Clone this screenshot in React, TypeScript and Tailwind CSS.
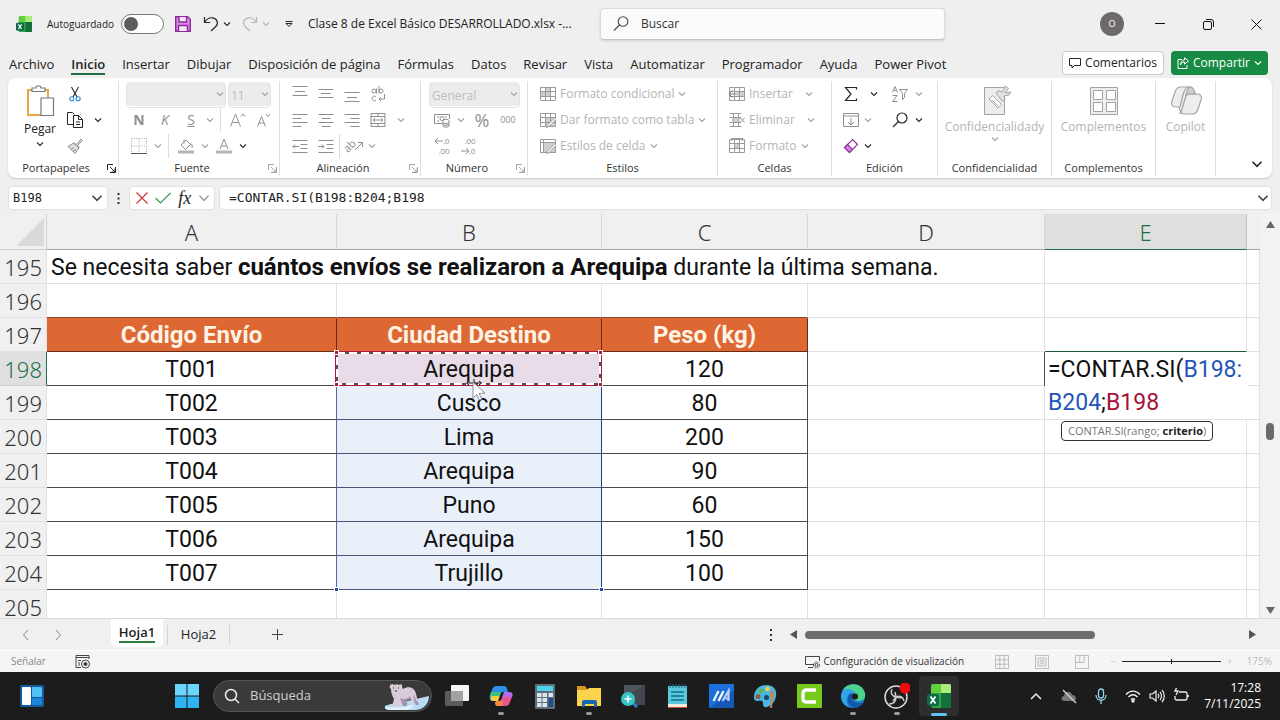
import { ReactNode } from "react";

const GRAY = "#a3a3a3";
const DARK = "#262626";

interface IconProps {
  children: ReactNode;
  size?: string;
  box?: string;
  color?: string;
  width?: number;
}

function Icon({ children, size = "size-4", box = "0 0 16 16", color = GRAY, width = 1 }: IconProps) {
  return (
    <svg
      className={`${size} shrink-0`}
      viewBox={box}
      fill="none"
      stroke={color}
      strokeWidth={width}
      aria-hidden="true"
    >
      {children}
    </svg>
  );
}

function Chevron({ color = GRAY, size = "size-2" }: { color?: string; size?: string }) {
  return (
    <Icon size={size} box="0 0 8 8" color={color} width={1.1}>
      <path d="M1 2.5 4 5.5 7 2.5" />
    </Icon>
  );
}

interface ToolProps {
  label: string;
  children: ReactNode;
  className?: string;
}

function Tool({ label, children, className = "w-[26px]" }: ToolProps) {
  return (
    <button
      type="button"
      aria-label={label}
      className={`flex h-[26px] shrink-0 items-center justify-center ${className}`}
    >
      {children}
    </button>
  );
}

function Drop({ label, color, className = "w-3" }: { label: string; color?: string; className?: string }) {
  return (
    <Tool label={label} className={className}>
      <Chevron color={color} />
    </Tool>
  );
}

interface GroupProps {
  label?: string;
  launcher?: string;
  className: string;
  pad?: string;
  children: ReactNode;
}

function Group({ label, launcher, className, pad = "", children }: GroupProps) {
  return (
    <section
      aria-label={label}
      className={`mb-[2px] mt-[3px] flex shrink-0 flex-col border-r border-[#dedede] ${className}`}
    >
      <div className={`h-[79px] ${pad}`}>{children}</div>
      <div className="flex h-4 items-center text-[11px] leading-4 text-[#333]">
        <span className="flex-1 text-center">{label}</span>
        {launcher && (
          <button type="button" aria-label={`Opciones de ${label}`} className="flex w-[14px] justify-center">
            <Icon size="size-[9px]" box="0 0 9 9" color={launcher}>
              <path d="M8.5 3V8.500H3M.5 6V.5H6M3 3l4.500 4.500M8 4.500V8H4.500" />
            </Icon>
          </button>
        )}
      </div>
    </section>
  );
}

function Row({ children, className = "" }: { children: ReactNode; className?: string }) {
  return <div className={`flex h-[26px] items-center ${className}`}>{children}</div>;
}

function Divider({ className = "" }: { className?: string }) {
  return <span className={`h-6 w-px bg-[#dcdcdc] ${className}`} />;
}

function ExcelLogo({ size }: { size: string }) {
  return (
    <svg className={size} viewBox="0 0 24 24" aria-hidden="true">
      <path d="M4 2a2 2 0 0 1 2-2h16a2 2 0 0 1 2 2v7H4z" fill="#5fd13f" />
      <path d="M14 0h8a2 2 0 0 1 2 2v7H14z" fill="#a9ee7a" />
      <path d="M4 9h20v13a2 2 0 0 1-2 2H6a2 2 0 0 1-2-2z" fill="#2aa84a" />
      <path d="M14 9h10v13a2 2 0 0 1-2 2h-8z" fill="#14713a" />
      <rect y="10" width="12" height="12" rx="2" fill="#0f6b45" />
      <path d="m3.500 12.500 5 7M8.500 12.500l-5 7" stroke="#fff" strokeWidth="1.800" />
    </svg>
  );
}

function TitleBar() {
  return (
    <header className="flex h-12 shrink-0 items-center">
      <div className="flex w-[600px] shrink-0 items-center pl-4">
        <ExcelLogo size="size-4" />
        <label className="ml-[15px] flex items-center gap-1 text-[10px]">
          <span className="w-[70px] whitespace-nowrap">Autoguardado</span>
          <input
            type="checkbox"
            role="switch"
            className="h-5 w-[43px] appearance-none rounded-full border border-[#767676] bg-white p-[2px] before:block before:size-[14px] before:rounded-full before:bg-[#5c5c5c]"
          />
        </label>
        <Tool label="Guardar" className="ml-[6px] w-[26px]">
          <Icon color="#8f2a9e" width={1.4}>
            <path d="M.7.700h12L15.300 3.300v12H.7z" fill="#d58be2" />
            <path d="M4 1v5h7.500V1M3.500 15v-5.500h9V15" fill="#f4e6f7" />
          </Icon>
        </Tool>
        <Tool label="Deshacer" className="ml-[5px] w-5">
          <Icon color={DARK} width={1.2}>
            <path d="M1.500 1v5.500H7M1.800 6.200C4 2.500 7 1.500 9.500 1.800c5 .8 6.500 6 3 9L8 15" />
          </Icon>
        </Tool>
        <Drop label="Lista de deshacer" color={DARK} className="w-3" />
        <Tool label="Rehacer" className="ml-[7px] w-5">
          <Icon color="#b5b5b5" width={1.2}>
            <path d="M14.500 1v5.500H9M14.200 6.200C12 2.500 9 1.500 6.500 1.800c-5 .8-6.500 6-3 9L8 15" />
          </Icon>
        </Tool>
        <Drop label="Lista de rehacer" color="#b5b5b5" />
        <Tool label="Personalizar barra" className="ml-[6px] w-[22px]">
          <Icon size="size-2" box="0 0 8 8" color={DARK}>
            <path d="M.5 1.500h7M1 3.500 4 6.500l3-3z" />
          </Icon>
        </Tool>
        <h1 className="ml-2 whitespace-pre text-[12px]">Clase 8 de Excel Básico DESARROLLADO.xlsx -...</h1>
      </div>
      <div className="flex h-8 w-[345px] items-center rounded border border-[#dcdcdc] border-b-[#c4c4c4] bg-[#fbfbfb] pl-3 shadow-sm">
        <Icon color="#444" width={1.1}>
          <circle cx="10" cy="5.500" r="4.800" />
          <path d="M6.500 9 1 14.500" />
        </Icon>
        <input
          type="search"
          aria-label="Buscar"
          placeholder="Buscar"
          className="ml-3 min-w-0 flex-1 bg-transparent text-[12px] outline-none placeholder:text-[#333]"
        />
      </div>
      <button type="button" className="ml-auto mr-3 size-6 rounded-full bg-[#6e6a69] text-[9px] text-white">
        O
      </button>
      <Tool label="Minimizar" className="w-12">
        <Icon size="size-[10px]" box="0 0 10 10" color="#111">
          <path d="M0 4.500h10" />
        </Icon>
      </Tool>
      <Tool label="Restaurar" className="w-12">
        <Icon size="size-[11px]" box="0 0 11 11" color="#111">
          <rect x=".5" y="2.500" width="8" height="8" rx="1.500" />
          <path d="M3 .5h5a2.500 2.500 0 0 1 2.500 2.500v5" />
        </Icon>
      </Tool>
      <Tool label="Cerrar" className="w-12">
        <Icon size="size-[11px]" box="0 0 11 11" color="#111">
          <path d="m.5.5 10 10M10.500.5l-10 10" />
        </Icon>
      </Tool>
    </header>
  );
}

const menu = [
  "Archivo",
  "Inicio",
  "Insertar",
  "Dibujar",
  "Disposición de página",
  "Fórmulas",
  "Datos",
  "Revisar",
  "Vista",
  "Automatizar",
  "Programador",
  "Ayuda",
  "Power Pivot",
];

function MenuBar() {
  return (
    <div className="flex h-[30px] shrink-0 items-center pl-[9px] pr-3 text-[13px]">
      <nav className="mt-[3px] flex gap-[17px] whitespace-nowrap leading-[18px]">
        {menu.map((name) => (
          <button
            key={name}
            type="button"
            className={
              name === "Inicio"
                ? "border-b-2 border-[#1e7145] font-semibold"
                : "border-b-2 border-transparent"
            }
          >
            {name}
          </button>
        ))}
      </nav>
      <button
        type="button"
        className="ml-auto flex h-6 w-[102px] items-center justify-center gap-1 rounded border border-[#c8c8c8] bg-white text-[12px]"
      >
        <Icon size="size-3" box="0 0 12 12" color={DARK}>
          <path d="M.5 1.500h11v7H5.500L3 11V8.500H.5z" />
        </Icon>
        Comentarios
      </button>
      <button
        type="button"
        className="ml-[7px] flex h-6 w-[97px] items-center justify-center gap-1 rounded bg-[#178a43] text-[12px] text-white"
      >
        <Icon size="size-3" box="0 0 12 12" color="#fff">
          <path d="M5 2.500H1v9h9V8M7.500.800l4 3.200-4 3.200V5C5 5 4 6 3.500 8 3.500 5 5 3 7.500 3z" />
        </Icon>
        Compartir
        <Chevron color="#fff" />
      </button>
    </div>
  );
}

function Lines({ d }: { d: string }) {
  return (
    <Icon color="#8f8f8f">
      <path d={d} />
    </Icon>
  );
}

function GridIcon({ children, fill }: { children?: ReactNode; fill: string }) {
  return (
    <Icon color="#9a9a9a">
      <path d={fill} fill="#cfcfcf" stroke="none" />
      <path d="M.5 1.500h15v13H.5zM.5 5.500h15M.5 10.500h15M5.500 1.500v13M10.500 1.500v13" />
      {children}
    </Icon>
  );
}

function FormatButton({ icon, children, gap = "gap-1" }: { icon: ReactNode; children: ReactNode; gap?: string }) {
  return (
    <button type="button" className={`flex h-[26px] items-center whitespace-nowrap text-[12px] text-[#b4b4b4] ${gap}`}>
      {icon}
      {children}
      <Chevron />
    </button>
  );
}

function ComboBox({ label, value, className }: { label: string; value: string; className: string }) {
  return (
    <div className={`relative h-6 rounded bg-[#ececec] ${className}`}>
      <select
        aria-label={label}
        className="h-6 w-full appearance-none rounded border border-[#e4e4e4] pl-[2px] text-[12px] leading-[22px] text-[#bdbdbd]"
      >
        <option>{value}</option>
      </select>
      <span className="pointer-events-none absolute right-[2px] top-2">
        <Chevron />
      </span>
    </div>
  );
}

function Ribbon() {
  return (
    <div className="mx-2 flex h-[100px] shrink-0 rounded-lg bg-white shadow-[0_1px_2px_rgba(0,0,0,0.15)]">
      <Group label="Portapapeles" launcher={DARK} className="w-[111px]">
        <div className="flex">
          <button type="button" className="ml-[10px] flex w-11 flex-col items-center text-[12px] leading-4">
            <Icon size="mt-1 h-8 w-[30px]" box="0 0 30 32" color="#7a7a7a" width={1.2}>
              <path d="M3 5h20v25H3z" stroke="#e9a548" strokeWidth="2" />
              <path d="M7 6.500V3h4c0-3 5-3 5 0h4v3.500z" fill="#fff" />
              <path d="M16 13h12.500v17.500H16z" fill="#fff" />
            </Icon>
            <span className="mt-1">Pegar</span>
            <span className="mt-[3px]">
              <Chevron color={DARK} />
            </span>
          </button>
          <div>
            <Tool label="Cortar">
              <Icon color={DARK} width={1.1}>
                <path d="M4.500 1l5.500 10M11.500 1 6 11" />
                <circle cx="4.800" cy="12.800" r="2" stroke="#2b88d8" />
                <circle cx="11.200" cy="12.800" r="2" stroke="#2b88d8" />
              </Icon>
            </Tool>
            <Row>
              <Tool label="Copiar">
                <Icon color={DARK}>
                  <path d="M6.500 12.500H.5V.5h5l2 2M6.500 3.500h5l4 4v8h-9zM11.500 3.500v4h4M9 10h4M9 12.500h4" />
                </Icon>
              </Tool>
              <Drop label="Opciones de copiar" color={DARK} className="w-5" />
            </Row>
            <Tool label="Copiar formato">
              <Icon color="#8f8f8f">
                <path d="m10 6 4-5 1.500 1.500L11 7M7 4.500l5.500 5M6.500 5 1 8.500 8 15.500l4-5.500z" fill="#dedede" />
                <path d="m4 11.500 3-2M6 13.500l3-2" />
              </Icon>
            </Tool>
          </div>
        </div>
      </Group>

      <Group label="Fuente" launcher={GRAY} className="w-[161px]" pad="pl-[7px]">
        <Row className="gap-[2px]">
          <ComboBox label="Fuente" value="" className="w-[100px]" />
          <ComboBox label="Tamaño" value="11" className="w-[43px]" />
        </Row>
        <Row className="text-[14px] leading-4 text-[#8f8f8f]">
          <Tool label="Negrita">
            <b>N</b>
          </Tool>
          <Tool label="Cursiva">
            <i>K</i>
          </Tool>
          <Tool label="Subrayado">
            <u>S</u>
          </Tool>
          <Drop label="Tipos de subrayado" />
          <Divider className="mx-1" />
          <Tool label="Aumentar tamaño">
            <Icon color="#8f8f8f">
              <path d="M.5 14.500 5.500 2l5 12.500M2.300 10.500h6.400M11 4.500l2-2.500 2 2.500" />
            </Icon>
          </Tool>
          <Tool label="Disminuir tamaño">
            <Icon color="#8f8f8f">
              <path d="M1.500 14.500 5.500 4.500l4 10M3 11h5M10 2l2 2.500L14 2" />
            </Icon>
          </Tool>
        </Row>
        <Row>
          <Tool label="Bordes">
            <Icon>
              <path d="M.5.5h15v15M.5.5v15M8 .5v15M.5 8h15" strokeDasharray="1 1.500" />
              <path d="M0 15.500h16" stroke="#555" />
            </Icon>
          </Tool>
          <Drop label="Tipos de borde" />
          <Divider className="mx-1" />
          <Tool label="Color de relleno">
            <Icon color="#8f8f8f">
              <path d="m3 7 5-5 4.500 4.500-5 5zM6 1.500v4M12.500 5c1.500 1 2 2.500 1.500 5" />
              <path d="M0 14h16" stroke="#b5b5b5" strokeWidth="3" />
            </Icon>
          </Tool>
          <Drop label="Colores de relleno" />
          <Tool label="Color de fuente">
            <Icon color="#8f8f8f">
              <path d="M4 11 8 1l4 10M5.300 8h5.400" />
              <path d="M0 14h16" stroke="#b5b5b5" strokeWidth="3" />
            </Icon>
          </Tool>
          <Drop label="Colores de fuente" color={DARK} />
        </Row>
      </Group>

      <Group label="Alineación" launcher={GRAY} className="w-[141px]" pad="pl-[7px]">
        <Row>
          <Tool label="Alinear arriba">
            <Lines d="M.5.5h15M3 5.500h10M.5 9.500h15" />
          </Tool>
          <Tool label="Alinear al medio">
            <Lines d="M.5 3.500h15M3 7.500h10M.5 11.500h15" />
          </Tool>
          <Tool label="Alinear abajo">
            <Lines d="M.5 6.500h15M3 11.500h10M.5 15.500h15" />
          </Tool>
          <Tool label="Ajustar texto">
            <Icon color="#8f8f8f">
              <circle cx="4" cy="5" r="2" />
              <path d="M6.500 2.500v5M9 0v7.500M6 10.500c-2-1-4 0-4 2s2 3 4 2M14.500 8v5H9M11 11l-2 2 2 2" />
              <circle cx="11" cy="5" r="2" />
            </Icon>
          </Tool>
        </Row>
        <Row>
          <Tool label="Alinear a la izquierda">
            <Lines d="M.5 2.500h15M.5 6.500h9M.5 10.500h15M.5 14.500h9" />
          </Tool>
          <Tool label="Centrar">
            <Lines d="M.5 2.500h15M3.500 6.500h9M.5 10.500h15M3.500 14.500h9" />
          </Tool>
          <Tool label="Alinear a la derecha">
            <Lines d="M.5 2.500h15M6.500 6.500h9M.5 10.500h15M6.500 14.500h9" />
          </Tool>
          <Tool label="Combinar y centrar">
            <Lines d="M1 1.500h14v13H1zM1 4.500h14M1 11.500h14M8 1.500v3M8 11.500v3M3 8h10M5 6 3 8l2 2M11 6l2 2-2 2" />
          </Tool>
          <Drop label="Opciones de combinar" className="w-5" />
        </Row>
        <Row>
          <Tool label="Disminuir sangría">
            <Lines d="M.5 2.500h15M8.500 6.500h7M8.500 10.500h7M.5 14.500h15M1 8.500h6M3 6.500l-2 2 2 2" />
          </Tool>
          <Tool label="Aumentar sangría">
            <Lines d="M.5 2.500h15M8.500 6.500h7M8.500 10.500h7M.5 14.500h15M0 8.500h6M4 6.500l2 2-2 2" />
          </Tool>
          <Divider />
          <Tool label="Orientación" className="w-[26px] text-[#8f8f8f]">
            <span className="-rotate-45 text-[11px] leading-3">ab</span>
            <Icon size="size-2" box="0 0 8 8" color="#8f8f8f">
              <path d="M0 8 7 1M3 .5h4.500V5" />
            </Icon>
          </Tool>
          <Drop label="Opciones de orientación" />
        </Row>
      </Group>

      <Group label="Número" launcher={GRAY} className="w-[107px]" pad="pl-2">
        <Row>
          <ComboBox label="Formato de número" value="General" className="w-[91px]" />
        </Row>
        <Row className="text-[#8f8f8f]">
          <Tool label="Formato de contabilidad">
            <Icon color="#8f8f8f">
              <path d="M8 11.500H.5v-9h15V7M3 5h2M11 5h2M3 9h2" />
              <circle cx="8" cy="6.500" r="2" />
              <path d="M9 8.500c0-1.500 6-1.500 6 0v5.500c0 1.500-6 1.500-6 0zM9 10.500c0 1.500 6 1.500 6 0M9 12.500c0 1 6 1 6 0" fill="#fff" />
            </Icon>
          </Tool>
          <Drop label="Monedas" />
          <Tool label="Porcentaje" className="ml-[2px] w-[26px] text-[18px]">
            %
          </Tool>
          <Tool label="Estilo millares" className="w-[26px] text-[9px]">
            000
          </Tool>
        </Row>
        <Row className="text-[8px] leading-[10px] text-[#8f8f8f]">
          <Tool label="Aumentar decimales" className="w-[26px] flex-col">
            <span className="flex items-center">
              <Icon size="size-2" box="0 0 8 8" color="#8f8f8f">
                <path d="M0 4h8M3 1 0 4l3 3" />
              </Icon>
              .0
            </span>
            <span className="pl-1">.00</span>
          </Tool>
          <Tool label="Disminuir decimales" className="w-[26px] flex-col">
            <span className="pl-1">.00</span>
            <span className="flex items-center">
              <Icon size="size-2" box="0 0 8 8" color="#8f8f8f">
                <path d="M0 4h8M5 1l3 3-3 3" />
              </Icon>
              .0
            </span>
          </Tool>
        </Row>
      </Group>

      <Group label="Estilos" className="w-[190px]" pad="pl-3">
        <FormatButton icon={<GridIcon fill="M5 1h6v9H5zM1 5h4v5H1z" />}>Formato condicional</FormatButton>
        <FormatButton
          icon={
            <GridIcon fill="M5 5h10v9H5z">
              <path d="m15.500 5-8 8-1 2.500 2.500-1 7-7z" fill="#fff" />
            </GridIcon>
          }
        >
          Dar formato como tabla
        </FormatButton>
        <FormatButton
          icon={
            <Icon color="#9a9a9a">
              <path d="M.5 1.500h15v13H.5z" />
              <path d="M3.500 4.500h12v10h-12z" fill="#cfcfcf" />
              <path d="M.5 4.500h15M3.500 1.500v13" />
              <path d="m15.500 5-8 8-1 2.500 2.500-1 7-7z" fill="#fff" />
            </Icon>
          }
        >
          Estilos de celda
        </FormatButton>
      </Group>

      <Group label="Celdas" className="w-[114px]" pad="pl-[11px]">
        <FormatButton
          gap="gap-1 [&>svg:last-child]:ml-2"
          icon={
            <GridIcon fill="M8 5h7v5H8z">
              <path d="M0 8h8M3.500 4.500 0 8l3.500 3.500" stroke="#777" />
            </GridIcon>
          }
        >
          Insertar
        </FormatButton>
        <FormatButton
          gap="gap-1 [&>svg:last-child]:ml-2"
          icon={
            <Icon color="#9a9a9a">
              <path d="M4 5.500h6v5H4z" fill="#cfcfcf" />
              <path d="M.5 1.500h12M.5 14.500h12M4.500 1.500v4M9.500 1.500v4M4.500 10.500v4M9.500 10.500v4M.5 5.500h12M.5 10.500H12M11.500 6l4 4.500M15.500 6l-4 4.500" />
            </Icon>
          }
        >
          Eliminar
        </FormatButton>
        <FormatButton
          icon={
            <GridIcon fill="M5 5h6v5H5z">
              <path d="M2.500 0v3M13.500 0v3M2.500.500h11" />
            </GridIcon>
          }
        >
          Formato
        </FormatButton>
      </Group>

      <Group label="Edición" className="w-[106px]" pad="pl-[6px]">
        <Row>
          <Tool label="Autosuma">
            <Icon color={DARK} width={1.2}>
              <path d="M13.500 3.500V1.500H2.500L8 8l-5.500 6.500h11v-2" />
            </Icon>
          </Tool>
          <Drop label="Funciones" color={DARK} className="w-5" />
          <Tool label="Ordenar y filtrar" className="ml-px w-[30px]">
            <Icon color="#8f8f8f">
              <path d="M.5 6.500 3 .5l2.500 6M1.500 4.500h3M.5 9.500H5L.5 15.500H5.500M7.500 3.500h8l-3 4v4l-2 2v-6z" />
            </Icon>
          </Tool>
          <Drop label="Opciones de orden" className="w-2" />
        </Row>
        <Row>
          <Tool label="Rellenar">
            <Icon color="#8f8f8f">
              <path d="M.5 1.500h15v13H.5zM.5 4h15M8 6v7M5 10l3 3 3-3" />
            </Icon>
          </Tool>
          <Drop label="Opciones de relleno" className="w-2" />
          <Tool label="Buscar y seleccionar" className="ml-[13px] w-[30px]">
            <Icon color={DARK} width={1.2}>
              <circle cx="10" cy="6" r="5" />
              <path d="M6.500 9.500 1 15" />
            </Icon>
          </Tool>
          <Drop label="Opciones de búsqueda" color={DARK} className="w-2" />
        </Row>
        <Row>
          <Tool label="Borrar">
            <Icon color="#8f2a9e" width={1.1}>
              <path d="M9.500 1.500 14.500 6.500 6.500 14.500 1.500 9.500z" fill="#fff" />
              <path d="m4.500 6.500 5 5-3 3-5-5z" fill="#d58be2" />
            </Icon>
          </Tool>
          <Drop label="Opciones de borrar" color={DARK} className="w-2" />
        </Row>
      </Group>

      <Group label="Confidencialidad" className="w-[114px]">
        <button type="button" className="flex w-full flex-col items-center pt-[3px] text-[12px] leading-4 text-[#b4b4b4]">
          <Icon size="size-8" box="0 0 32 32">
            <path d="M5.500 3.500h20v27h-20z" fill="#ededed" />
            <path d="m10 15 3.500-3.500 9 9L19 24z" fill="#fff" />
            <path d="m12.500 15.500 6.500 6.500" />
            <path d="m17 9 3-2.500 3 2 3.500-6.500 3 2.500L26 9l6-1-2 3-5 1 1 3.500-2.500 2z" fill="#e2e2e2" />
          </Icon>
          <span className="mt-[3px]">Confidencialidady</span>
          <Chevron />
        </button>
      </Group>

      <Group label="Complementos" className="w-[104px]">
        <button type="button" className="flex w-full flex-col items-center pt-[3px] text-[12px] leading-4 text-[#b4b4b4]">
          <Icon size="size-8" box="0 0 32 32">
            <path d="M2.500 3.500h27v27h-27z" fill="#ededed" />
            <path d="M5.500 6.500h9v9h-9zM18.500 6.500h9v9h-9zM5.500 18.500h9v9h-9zM18.500 18.500h9v9h-9z" fill="#fff" />
          </Icon>
          <span className="mt-[3px]">Complementos</span>
        </button>
      </Group>

      <Group className="w-[60px]">
        <button type="button" className="flex w-full flex-col items-center pt-[3px] text-[12px] leading-4 text-[#b4b4b4]">
          <Icon size="size-8" box="0 0 32 32" width={1.2}>
            <path
              d="M11 3h9c4 0 4 4 5 7h3c3 0 4 3 3 6l-3 9c-1 3-2 5-5 5h-9c-4 0-4-4-5-7H5c-3 0-4-3-3-6l3-9c1-3 2-5 6-5z"
              fill="#ededed"
            />
            <path d="M18 3c-3 1-4 4-5 8l-3 12M25 10h-6c-3 0-3 2-4 5l-3 10c-.5 3-1 4-3 5" />
            <path d="M20 3c4 0 4 4 5 7h-6l-3 1c1-4 2-8 4-8z" fill="#cfcfcf" />
          </Icon>
          <span className="mt-[3px]">Copilot</span>
        </button>
      </Group>

      <button type="button" aria-label="Contraer cinta" className="mb-2 ml-auto mr-[9px] self-end">
        <Chevron color={DARK} size="size-3" />
      </button>
    </div>
  );
}

function FormulaBar() {
  return (
    <div className="mt-2 flex h-6 shrink-0 items-center px-2 text-[13px]">
      <div className="flex h-6 w-[100px] items-center rounded border border-[#e2e2e2] bg-white px-1">
        <input
          aria-label="Cuadro de nombres"
          defaultValue="B198"
          className="w-0 flex-1 font-['DejaVu_Sans_Mono',monospace] text-[12px] outline-none"
        />
        <Chevron color="#444" size="size-3" />
      </div>
      <span className="flex w-[21px] justify-center">
        <Icon size="h-[11px] w-[3px]" box="0 0 3 11" color="none">
          <path d="M.5 0h2v2h-2zM.5 4.500h2v2h-2zM.5 9h2v2h-2z" fill="#333" />
        </Icon>
      </span>
      <div className="flex h-6 w-[86px] items-center justify-between rounded border border-[#e2e2e2] bg-white px-1">
        <Tool label="Cancelar" className="w-4">
          <Icon size="size-3" box="0 0 12 12" color="#d13438" width={1.1}>
            <path d="m.5.5 11 11M11.500.5l-11 11" />
          </Icon>
        </Tool>
        <Tool label="Introducir" className="w-4">
          <Icon color="#2e9a54" width={1.1}>
            <path d="m.5 8 5 5 10-10" />
          </Icon>
        </Tool>
        <Tool label="Insertar función" className="w-4 font-['Liberation_Serif',serif] text-[18px] italic">
          fx
        </Tool>
        <Chevron size="size-3" />
      </div>
      <div className="ml-1 flex h-6 flex-1 items-center rounded border border-[#e2e2e2] bg-white pl-[9px] pr-[2px]">
        <input
          aria-label="Barra de fórmulas"
          defaultValue="=CONTAR.SI(B198:B204;B198"
          className="min-w-0 flex-1 font-['DejaVu_Sans_Mono',monospace] outline-none"
        />
        <Chevron color="#444" size="size-3" />
      </div>
    </div>
  );
}

const shipments = [
  { row: 198, code: "T001", city: "Arequipa", weight: 120 },
  { row: 199, code: "T002", city: "Cusco", weight: 80 },
  { row: 200, code: "T003", city: "Lima", weight: 200 },
  { row: 201, code: "T004", city: "Arequipa", weight: 90 },
  { row: 202, code: "T005", city: "Puno", weight: 60 },
  { row: 203, code: "T006", city: "Arequipa", weight: 150 },
  { row: 204, code: "T007", city: "Trujillo", weight: 100 },
];

const cell = "border-b border-r border-[#e1e1e1] p-0";
const data = "border-b border-r border-[#4a4a4a] p-0 pt-[2px]";

function RowHead({ row }: { row: number }) {
  return (
    <th
      scope="row"
      className={
        row === 198
          ? "h-[34px] border-b border-r border-b-[#d0d0d0] border-r-[#1e7145] bg-[#e0e0e0] p-0 pr-1 pt-px text-right font-['Noto_Sans',sans-serif] text-[22px] font-light text-[#1e7145]"
          : "h-[34px] border-b border-r border-[#e1e1e1] bg-[#f0f0f0] p-0 pr-1 pt-px text-right font-['Noto_Sans',sans-serif] text-[22px] font-light text-[#333]"
      }
    >
      {row}
    </th>
  );
}

function Handle({ className }: { className: string }) {
  return <span className={`absolute z-10 size-[5px] border border-white ${className}`} />;
}

function ActiveReference() {
  return (
    <div className="pointer-events-none absolute -inset-px left-[-2px] border-2 border-[#b0183a]">
      <svg className="absolute -inset-px h-[calc(100%+2px)] w-[calc(100%+2px)]" fill="none" strokeWidth="2" aria-hidden="true">
        <rect x="1" y="1" className="h-[calc(100%-2px)] w-[calc(100%-2px)]" stroke="#5d4a4e" />
        <rect x="1" y="1" className="h-[calc(100%-2px)] w-[calc(100%-2px)]" stroke="#fff" strokeDasharray="8 4" />
      </svg>
      <Handle className="-left-[3px] -top-[3px] bg-[#b0183a]" />
      <Handle className="-right-[3px] -top-[3px] bg-[#b0183a]" />
      <Handle className="-bottom-[3px] -left-[3px] bg-[#b0183a]" />
      <Handle className="-bottom-[3px] -right-[3px] bg-[#b0183a]" />
      <svg className="absolute left-[128px] top-[24px] z-20 h-6 w-[22px]" viewBox="0 0 22 24" aria-hidden="true">
        <path d="M2 6h14M4 4 1.500 6 4 8M14 4l2.500 2L14 8M9 2v4" fill="none" stroke="#111" />
        <path d="m8 5 12 11-6 .5 3 5.500-2.500 1.200-2.800-5.700L8 21z" fill="#fff" stroke="#777" strokeWidth=".8" />
      </svg>
    </div>
  );
}

function Sheet() {
  return (
    <div className="mt-1 flex min-h-0 flex-1 overflow-hidden">
      <div className="min-w-0 flex-1 overflow-hidden">
        <table className="w-full table-fixed border-separate border-spacing-0 bg-white font-['Roboto',sans-serif] text-[23px] leading-[31px] text-[#111]">
          <colgroup>
            <col className="w-[47px]" />
            <col className="w-[290px]" />
            <col className="w-[265px]" />
            <col className="w-[206px]" />
            <col className="w-[237px]" />
            <col className="w-[202px]" />
            <col />
          </colgroup>
          <thead>
            <tr className="bg-[#f0f0f0] font-['Noto_Sans',sans-serif] text-[22px]">
              <th aria-label="Seleccionar todo" className="h-9 border-b border-r border-[#d0d0d0] p-0">
                <svg className="ml-4 h-7 w-7" viewBox="0 0 28 28" aria-hidden="true">
                  <path d="M28 0v28H0z" fill="#dadada" />
                </svg>
              </th>
              {["A", "B", "C", "D"].map((name) => (
                <th
                  key={name}
                  scope="col"
                  className="border-b border-r border-b-[#a5a5a5] border-r-[#d8d8d8] p-0 pt-[2px] font-light text-[#333]"
                >
                  {name}
                </th>
              ))}
              <th
                scope="col"
                className="border-b border-r border-b-[#1e7145] border-r-[#c4c4c4] bg-[#dfdfdf] p-0 pt-[2px] font-light text-[#1e7145]"
              >
                E
              </th>
              <th className="border-b border-[#a5a5a5] p-0" />
            </tr>
          </thead>
          <tbody>
            <tr>
              <RowHead row={195} />
              <td colSpan={4} className="whitespace-nowrap border-b border-r border-[#e1e1e1] p-0 pl-1 pt-[2px]">
                Se necesita saber <b className="text-[24px]">cuántos envíos se realizaron a Arequipa</b> durante la última
                semana.
              </td>
              <td className={cell} />
              <td className={cell} />
            </tr>
            <tr>
              <RowHead row={196} />
              <td className={`${cell} border-b-[#8a4a2a]`} />
              <td className={`${cell} border-b-[#8a4a2a]`} />
              <td className={`${cell} border-b-[#8a4a2a]`} />
              <td className={cell} />
              <td className={cell} />
              <td className={cell} />
            </tr>
            <tr>
              <RowHead row={197} />
              {["Código Envío", "Ciudad Destino", "Peso (kg)"].map((name) => (
                <th
                  key={name}
                  scope="col"
                  className="border-b border-r border-[#6b2b12] bg-[#dd6833] p-0 pt-[2px] text-[24px] font-bold text-[#fff3e6]"
                >
                  {name}
                </th>
              ))}
              <td className={cell} />
              <td className={`${cell} border-b-[#1e5a35]`} />
              <td className={cell} />
            </tr>
            {shipments.map(({ row, code, city, weight }) => (
              <tr key={row} className="text-center">
                <RowHead row={row} />
                <td className={`${data} border-r-[#5b6a9c]`}>{code}</td>
                <td
                  className={
                    row === 198
                      ? "relative border-b border-r border-[#1f3f86] bg-[#e8dce8] p-0 pt-[2px]"
                      : "relative border-b border-r border-b-[#4a5478] border-r-[#1f3f86] bg-[#eaf0fa] p-0 pt-[2px]"
                  }
                >
                  {city}
                  {row === 198 && <ActiveReference />}
                  {row === 204 && (
                    <>
                      <Handle className="-bottom-[3px] -left-[3px] bg-[#1f4fa8]" />
                      <Handle className="-bottom-[3px] -right-[3px] bg-[#1f4fa8]" />
                    </>
                  )}
                </td>
                <td className={data}>{weight}</td>
                <td className={cell} />
                {row === 198 && (
                  <td rowSpan={2} className="relative border-b border-[#e1e1e1] p-0 pl-[3px] pt-px text-left align-top leading-[33px]">
                    <span className="absolute left-[-1px] top-0 h-[34px] w-px bg-[#555]" />
                    =CONTAR.SI(<span className="text-[#2456b8]">B198:</span>
                    <br />
                    <span className="text-[#2456b8]">B204</span>;<span className="text-[#a5123a]">B198</span>
                    <div
                      role="tooltip"
                      className="absolute left-4 top-[69px] h-5 whitespace-nowrap rounded border border-[#333] bg-white px-[6px] font-['Open_Sans',sans-serif] text-[11px] leading-[18px] text-[#777]"
                    >
                      CONTAR.SI(rango; <b className="text-[#222]">criterio</b>)
                    </div>
                  </td>
                )}
                {row > 199 && <td className={cell} />}
                <td className={cell} />
              </tr>
            ))}
            <tr>
              <RowHead row={205} />
              <td className={cell} />
              <td className={cell} />
              <td className={cell} />
              <td className={cell} />
              <td className={cell} />
              <td className={cell} />
            </tr>
          </tbody>
        </table>
      </div>
      <div className="flex w-5 shrink-0 flex-col items-center bg-[#f2f2f2] pb-[3px] pt-[6px]">
        <Icon size="size-[9px]" box="0 0 9 9" color="none">
          <path d="M4.500 1 9 8H0z" fill="#666" />
        </Icon>
        <span className="mt-auto h-[17px] w-2 rounded-full bg-[#6a6a6a]" />
        <span className="h-[42%]" />
        <Icon size="size-[9px]" box="0 0 9 9" color="none">
          <path d="M4.500 8 9 1H0z" fill="#666" />
        </Icon>
      </div>
    </div>
  );
}

function SheetTabs() {
  return (
    <div className="flex h-8 shrink-0 items-center border-t border-[#d9d9d9] bg-[#f0f0f0] text-[13px]">
      <Tool label="Hoja anterior" className="ml-[10px] w-8">
        <Icon size="size-[10px]" box="0 0 10 10" color="#888">
          <path d="M7 0 2.500 5 7 10" />
        </Icon>
      </Tool>
      <Tool label="Hoja siguiente" className="w-8">
        <Icon size="size-[10px]" box="0 0 10 10" color="#888">
          <path d="m3 0 4.500 5L3 10" />
        </Icon>
      </Tool>
      <button type="button" className="ml-[37px] h-7 w-[52px] self-start rounded-b-md bg-white font-semibold">
        <span className="border-b-2 border-[#2f7d3a]">Hoja1</span>
      </button>
      <button type="button" className="ml-1 h-5 w-[63px] border-x border-[#d4d4d4]">
        Hoja2
      </button>
      <Tool label="Hoja nueva" className="ml-[34px] w-[26px]">
        <Icon size="size-[11px]" box="0 0 11 11" color="#444">
          <path d="M5.500 0v11M0 5.500h11" />
        </Icon>
      </Tool>
      <div className="ml-auto flex w-[511px] items-center">
        <Icon size="h-3 w-[5px]" box="0 0 5 12" color="none">
          <path d="M1 0h2v2H1zM1 5h2v2H1zM1 10h2v2H1z" fill="#333" />
        </Icon>
        <Tool label="Desplazar a la izquierda" className="ml-2 w-[23px]">
          <Icon size="size-[9px]" box="0 0 9 9" color="none">
            <path d="M1 4.500 8 0v9z" fill="#555" />
          </Icon>
        </Tool>
        <span className="h-2 w-[290px] rounded-full bg-[#6d6d6d]" />
        <Tool label="Desplazar a la derecha" className="ml-auto mr-4 w-6">
          <Icon size="size-[9px]" box="0 0 9 9" color="none">
            <path d="M8 4.500 1 0v9z" fill="#555" />
          </Icon>
        </Tool>
      </div>
    </div>
  );
}

function StatusBar() {
  return (
    <footer className="flex h-[22px] shrink-0 items-center border-t border-white bg-[#f5f5f5] pl-[11px] pr-2 text-[10px]">
      <span className="w-[64px] text-[#888]">Señalar</span>
      <Icon color="#444">
        <path d="M6 13.500H1v-12h13V5M1 3.500h13M3 6.500h3M3 9h2M3 11h2" />
        <circle cx="10.500" cy="10" r="4" />
        <circle cx="10.500" cy="10" r="1.500" fill="#222" />
      </Icon>
      <button type="button" className="ml-auto mr-[18px] flex items-center gap-[2px] whitespace-nowrap text-[#333]">
        <Icon color="#444">
          <path d="M9 10.500H.5v-8h14V7M3 13.500h5" />
          <circle cx="11.500" cy="11" r="3" strokeDasharray="1.500 1" />
          <circle cx="11.500" cy="11" r="1.500" />
        </Icon>
        Configuración de visualización
      </button>
      <div className="flex">
        <Tool label="Normal" className="w-10">
          <Icon size="size-[14px]" color="#b3b3b3">
            <path d="M.5.5h15v15H.5zM.5 5.500h15M.5 10.500h15M5.500.5v15M10.500.5v15" />
          </Icon>
        </Tool>
        <Tool label="Diseño de página" className="w-10">
          <Icon size="size-[14px]" color="#b3b3b3">
            <path d="M.5.5h15v15H.5zM3.500 3.500h9v9h-9zM5.500 6h5M5.500 8h5M5.500 10h5" />
          </Icon>
        </Tool>
        <Tool label="Vista previa de salto de página" className="w-10">
          <Icon size="size-[14px]" color="#b3b3b3">
            <path d="M.5.5h15v15H.5zM5.500.5v8M10.500.5v8M.5 8.500h10" />
          </Icon>
        </Tool>
      </div>
      <span className="ml-2 text-[#ccc]">−</span>
      <input
        type="range"
        aria-label="Zoom"
        defaultValue="50"
        className="mx-[6px] h-px w-[99px] appearance-none bg-[#222] [&::-webkit-slider-thumb]:h-[5px] [&::-webkit-slider-thumb]:w-px [&::-webkit-slider-thumb]:appearance-none [&::-webkit-slider-thumb]:bg-[#222]"
      />
      <span className="text-[#ccc]">+</span>
      <span className="ml-[14px] text-[#bbb]">175%</span>
    </footer>
  );
}

function Art({ children }: { children: ReactNode }) {
  return (
    <svg className="size-[26px]" viewBox="0 0 26 26" aria-hidden="true">
      {children}
    </svg>
  );
}

const apps = [
  {
    name: "Vista de tareas",
    art: (
      <>
        <rect x="1" y="8" width="18" height="15" rx="1" fill="#5b5b5b" />
        <rect x="7" y="2" width="18" height="16" rx="1" fill="#f5f5f5" />
        <path d="M7 8h12v10H7z" fill="#a2a2a2" />
      </>
    ),
  },
  {
    name: "Copilot",
    running: true,
    art: (
      <>
        <path d="M9 3h7c3 0 3 3 4 6h-5c-2 0-3 2-4 6l-1 3H5c-3 0-4-3-3-6l2-5c1-3 2-4 5-4z" fill="#2f8fe8" />
        <path d="M4 12h8l-2 6H5c-3 0-3-3-1-6z" fill="#f2cf3a" />
        <path d="M3 9h10l-1 4H2z" fill="#3fc07a" />
        <path d="M17 23h-7c-3 0-3-2-3-4h3c2 0 3-2 4-6l1-4h6c3 0 4 2 3 5l-2 5c-1 3-2 4-5 4z" fill="#e9558e" />
        <path d="M15 9h6c3 0 4 2 3 5h-9z" fill="#b26cf0" />
        <path d="M8 18h7l-1 5h-4c-2 0-3-2-2-5z" fill="#f58a3c" />
        <path d="m11 17 3-8h2l-3 8z" fill="#1c1c1c" />
      </>
    ),
  },
  {
    name: "Calculadora",
    art: (
      <>
        <rect x="3" y="1" width="20" height="25" rx="1" fill="#5f6f7c" />
        <path d="M5 3h16v5H5z" fill="#4cd3ea" />
        <path d="M5 10h4.500v4H5zM10.500 10H15v4h-4.500zM16.500 10H21v4h-4.500zM5 15h4.500v4H5zM10.500 15H15v4h-4.500zM5 20h4.500v4H5zM10.500 20H15v4h-4.500z" fill="#dfe6ea" />
        <path d="M16.500 15H21v9h-4.500z" fill="#1e4f86" />
      </>
    ),
  },
  {
    name: "Explorador de archivos",
    running: true,
    art: (
      <>
        <path d="M1 3h8l2 3h13v17H1z" fill="#d99a1c" />
        <path d="M1 7h10l2-2h12v18H1z" fill="#fbd34d" />
        <path d="M6 24v-5a2 2 0 0 1 2-2h11a2 2 0 0 1 2 2v5h-3v-3H9v3z" fill="#1767b3" />
      </>
    ),
  },
  {
    name: "Lupa",
    art: (
      <>
        <rect x="4" y="2" width="21" height="20" rx="1" fill="#50555b" />
        <path d="M4 14 25 2v20H4z" fill="#42474d" />
        <path d="m12 19 5 5" stroke="#2c7fd0" strokeWidth="3" />
        <circle cx="8" cy="16" r="7" fill="#35c5c5" />
        <path d="M8 12.500v7M4.500 16h7" stroke="#fff" strokeWidth="1.500" />
      </>
    ),
  },
  {
    name: "Bloc de notas",
    art: (
      <>
        <path d="M4 3h19v20H4z" fill="#5ac8dc" />
        <path d="M4 21h19v3H4z" fill="#f3e9df" />
        <path d="M4 24h19v1H4z" fill="#c0502c" />
        <path d="M7 9h13M7 13h13M7 17h13" stroke="#136f86" strokeWidth="1.500" />
        <path d="M6 1v4M9 1v4M12 1v4M15 1v4M18 1v4M21 1v4" stroke="#1d6d80" />
      </>
    ),
  },
  {
    name: "MyASUS",
    art: (
      <>
        <path d="M1 1h25v24H1z" fill="#1c6fdc" />
        <path d="M1 25 26 7v18z" fill="#1558b8" />
        <path d="m5.500 18 5-10M10.500 18l5-10" fill="none" stroke="#fff" strokeWidth="2.200" />
        <path d="m14.500 18 6-10v10M17.500 15.500h2" fill="none" stroke="#b9d4f7" strokeWidth="2.200" />
      </>
    ),
  },
  {
    name: "Paint",
    art: (
      <>
        <path d="M14 2c8 0 11 5 10 11s-4 9-9 11c-4 1-4-2-4-4s-2-3-5-2c-3 0-4-1-4-4C2 8 6 2 14 2z" fill="#4db4e4" />
        <circle cx="9" cy="8" r="2.500" fill="#5fb84a" />
        <circle cx="15.500" cy="6" r="2.300" fill="#f4d03f" />
        <circle cx="6" cy="13.500" r="2.500" fill="#8a5a3c" />
        <circle cx="14.500" cy="14.500" r="2.500" fill="#16456b" />
        <path d="M20 7c3 3 2 6 1 9l-1 9h-2l1-9c-2-3-1-6 1-9z" fill="#c08a4c" />
      </>
    ),
  },
  {
    name: "Camtasia",
    art: (
      <>
        <rect x="1" y="1" width="25" height="24" rx="1" fill="#77c91c" />
        <path d="M20 7h-9c-3 0-4 1-4 4v4c0 3 1 4 4 4h9" fill="none" stroke="#fff" strokeWidth="3.500" />
      </>
    ),
  },
  {
    name: "Edge",
    running: true,
    art: (
      <>
        <circle cx="13" cy="13" r="12" fill="#1b7fd4" />
        <path d="M3 7C6 2 12 0 18 2c6 3 8 8 7 12-1 4-7 5-10 3 3-5 0-8-4-9-4 0-6 0-8-1z" fill="#4fd38b" />
        <path d="M9 12c-3 5-1 11 6 13 4-.500 7-3 9-6-5 2-11 1-12-4 0-2 1-3 2-4-2-1-4-1-5 1z" fill="#1257a8" />
        <path d="M1 13c1-6 6-9 11-6 3 1 4 3 3 5-2-3-7-2-8 3-1 3 0 6 2 9-5-1-8-6-8-11z" fill="#33a4e6" />
        <circle cx="15" cy="13.500" r="3" fill="#1c1c1c" />
      </>
    ),
  },
  {
    name: "OBS Studio",
    running: true,
    art: (
      <>
        <circle cx="12" cy="14" r="11" fill="#1d1d1d" stroke="#d9d9d9" strokeWidth="1.500" />
        <path d="M12 14c-4-1-6-4-4-8M12 14c4-2 7 0 8 4M12 14c0 4-2 7-7 7M12 14l-1-5M12 14l5 1M12 14l-3 4" fill="none" stroke="#c9c9c9" strokeWidth="1.500" />
        <circle cx="21" cy="5" r="5.500" fill="#f00b0b" />
      </>
    ),
  },
];

function Taskbar() {
  return (
    <div className="flex h-12 shrink-0 items-center bg-[#1c1c1c] text-white">
      <button type="button" aria-label="Widgets" className="flex w-16 justify-center">
        <Art>
          <rect x="1" y="2" width="24" height="22" rx="2" fill="#155a9c" />
          <rect x="3" y="4" width="9" height="18" rx="1" fill="#fff" />
          <rect x="13" y="4" width="10" height="10" rx="1" fill="#4fc3f7" />
          <rect x="13" y="15" width="10" height="7" rx="1" fill="#1c86d8" />
        </Art>
      </button>
      <button type="button" aria-label="Inicio" className="ml-[101px] flex w-11 justify-center">
        <svg className="size-6" viewBox="0 0 24 24" aria-hidden="true">
          <path d="M0 0h11.500v11.500H0zM12.500 0H24v11.500H12.500z" fill="#6bd6fb" />
          <path d="M0 12.500h11.500V24H0zM12.500 12.500H24V24H12.500z" fill="#2fb4f2" />
        </svg>
      </button>
      <div className="ml-1 mr-[3px] flex h-8 w-[219px] items-center overflow-hidden rounded-full border border-[#555] bg-[#3a3a3a] pl-[10px]">
        <Icon color="#eee" width={1.5}>
          <circle cx="7" cy="7" r="5.500" />
          <path d="m11 11 4 4" />
        </Icon>
        <input
          aria-label="Búsqueda"
          placeholder="Búsqueda"
          className="ml-[10px] w-0 flex-1 bg-transparent text-[13px] outline-none placeholder:text-[#d0d0d0]"
        />
        <svg className="h-[30px] w-12" viewBox="0 0 48 30" aria-hidden="true">
          <path d="M2 25c4-2 12-3 18-4l26-6c0 8-6 14-14 14H8c-4 0-7-1-6-4z" fill="#b9dcf5" />
          <path d="M2 26c8 1 20 1 30-3-3 4-6 6-10 6H8c-4 0-6-1-6-3z" fill="#e4f2fc" />
          <path
            d="M7 5c0-2 3-3 4-1 2-1 4-1 5 0 2-2 4 0 3 2l1 2c6-4 12-1 13 5 1 3 1 5 2 8l1 3h-6l-2-6-4 1v6h-6l-1-2-3 3h-5l2-8c-2-3-3-7-3-10-1-1-2-2-1-3z"
            fill="#d9ccd8"
          />
          <path d="M17 17c4 2 8 1 10-2l1 3-4 1v6h-4zM31 13c1 4 2 7 4 8l1 3h-3c-2-4-3-7-2-11z" fill="#a493ad" />
          <path d="M10 7h1M15 7h1M12 10h2" stroke="#333" />
        </svg>
      </div>
      {apps.map(({ name, art, running }) => (
        <button key={name} type="button" aria-label={name} className="relative flex h-12 w-11 items-center justify-center">
          <Art>{art}</Art>
          {running && <span className="absolute bottom-[5px] h-[3px] w-[6px] rounded-full bg-[#9a9a9a]" />}
        </button>
      ))}
      <button
        type="button"
        aria-label="Excel"
        className="relative flex size-10 items-center justify-center rounded bg-[#2d2d2d]"
      >
        <ExcelLogo size="size-6" />
        <span className="absolute bottom-0 h-[3px] w-4 rounded-full bg-[#5cc4f0]" />
      </button>
      <div className="ml-auto flex items-center">
        <Tool label="Iconos ocultos" className="w-[34px]">
          <Icon size="size-3" box="0 0 12 12" color="#eee" width={1.5}>
            <path d="m1 9 5-5 5 5" />
          </Icon>
        </Tool>
        <Tool label="OneDrive" className="w-8">
          <Icon color="#ccc">
            <path d="M4 13c-5 0-4-5-1-5 0-5 7-6 8-1 5 0 5 6 1 6z" fill="#777" stroke="none" />
            <path d="m2 2 13 13" strokeWidth="1.500" />
          </Icon>
        </Tool>
        <Tool label="Micrófono" className="w-8">
          <Icon color="#8fd3ea" width={1.3}>
            <rect x="5.500" y="1" width="5" height="9" rx="2.500" />
            <path d="M3 7c0 7 10 7 10 0M8 12.500V16" />
          </Icon>
        </Tool>
        <Tool label="Red" className="w-8">
          <Icon color="#eee" width={1.4}>
            <path d="M1 6.500c4-4.500 10-4.500 14 0M3.500 9c3-3 6-3 9 0M6 11.500c1.500-1.300 2.500-1.300 4 0" />
            <circle cx="8" cy="13" r="1" fill="#eee" />
          </Icon>
        </Tool>
        <Tool label="Volumen" className="w-4">
          <Icon color="#eee" width={1.2}>
            <path d="M1 6h2.500L7 3v10l-3.500-3H1zM9 6c1 1 1 3 0 4M11 4c2 2 2 6 0 8M13 2c3 3 3 9 0 12" />
          </Icon>
        </Tool>
        <Tool label="Batería" className="w-8">
          <Icon color="#eee" width={1.3}>
            <path d="M6 4h6.500a1.500 1.500 0 0 1 1.500 1.500v5a1.500 1.500 0 0 1-1.500 1.500h-9A1.500 1.500 0 0 1 2 10.500V8M15.300 7v2M3.500 0 2 3h3L3 7" />
          </Icon>
        </Tool>
        <div className="mr-[19px] w-16 text-right text-[12px] leading-4">
          <div>17:28</div>
          <div>7/11/2025</div>
        </div>
      </div>
    </div>
  );
}

export default function App() {
  return (
    <div className="flex h-screen flex-col overflow-hidden bg-[#efefef] font-['Open_Sans','Noto_Sans',sans-serif] text-[#222]">
      <TitleBar />
      <MenuBar />
      <Ribbon />
      <FormulaBar />
      <Sheet />
      <SheetTabs />
      <StatusBar />
      <Taskbar />
    </div>
  );
}
